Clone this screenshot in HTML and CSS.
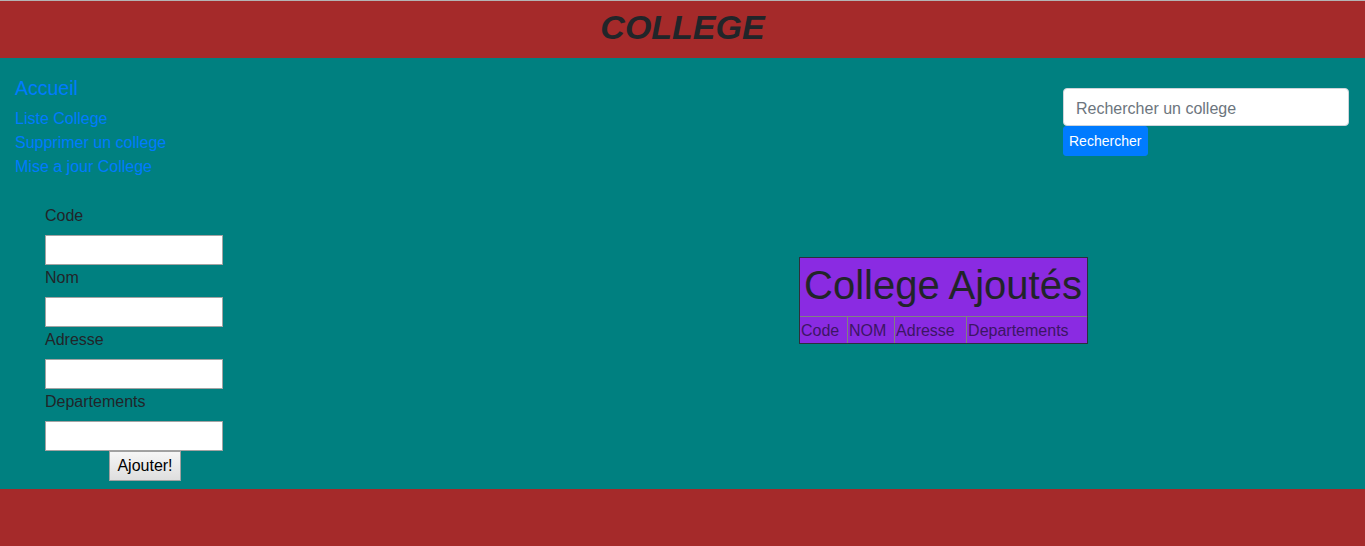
FILE: index.html
```html
<!DOCTYPE html>
<html lang="fr">
<head>
<meta charset="utf-8">
<title>College</title>
<link rel="stylesheet" href="styles.css">
</head>
<body>
<header class="topbar">
  <h1 class="brand">COLLEGE</h1>
</header>
<main class="main">
  <div class="leftcol">
    <nav class="nav">
      <a class="nav-home" href="#">Accueil</a>
      <a class="nav-link" href="#">Liste College</a>
      <a class="nav-link" href="#">Supprimer un college</a>
      <a class="nav-link" href="#">Mise a jour College</a>
    </nav>
    <form class="addform">
      <label class="field-label">Code</label>
      <input class="field" type="text">
      <label class="field-label">Nom</label>
      <input class="field" type="text">
      <label class="field-label">Adresse</label>
      <input class="field" type="text">
      <label class="field-label">Departements</label>
      <input class="field" type="text">
      <button class="add-btn" type="button">Ajouter!</button>
    </form>
  </div>
  <div class="rightcol">
    <div class="searchrow">
      <div class="search">
        <input class="search-input" type="text" placeholder="Rechercher un college">
        <button class="search-btn" type="button">Rechercher</button>
      </div>
    </div>
    <table class="ctable">
      <thead>
        <tr><th class="cap" colspan="4"><div class="cap-title">College Ajoutés</div></th></tr>
      </thead>
      <tbody>
        <tr>
          <td class="cell first">Code</td>
          <td class="cell">NOM</td>
          <td class="cell">Adresse</td>
          <td class="cell">Departements</td>
        </tr>
      </tbody>
    </table>
  </div>
</main>
<footer class="footer"></footer>
</body>
</html>
```
FILE: styles.css
```css
* { box-sizing: border-box; }
html, body { margin: 0; padding: 0; }
body {
  font-family: "Liberation Sans", Arial, sans-serif;
  font-size: 16px;
  line-height: 24px;
  color: #212529;
  background: #008080;
  border-top: 1px solid #b4b4b4;
}
.topbar {
  background: #a52a2a;
  height: 57px;
  display: flex;
  justify-content: center;
  align-items: flex-start;
}
.brand {
  margin: 0;
  font-size: 34px;
  font-weight: bold;
  font-style: italic;
  line-height: 53px;
  color: #212529;
}
.main {
  display: flex;
  background: #008080;
}
.leftcol {
  width: 245px;
  flex: 0 0 245px;
  padding: 17px 0 8px 15px;
}
.nav { display: flex; flex-direction: column; align-items: flex-start; }
.nav a { color: #007bff; text-decoration: none; }
.nav-home { font-size: 19.5px; line-height: 24px; padding-top: 1px; margin-bottom: 6px; }
.nav-link { font-size: 16px; line-height: 24px; padding-top: 1px; margin-bottom: -1px; }
.addform {
  width: 200px;
  margin: 25px 0 0 30px;
  display: flex;
  flex-direction: column;
  align-items: flex-start;
}
.field-label {
  display: block;
  line-height: 24px;
  padding-top: 1px;
  margin-bottom: 7px;
}
.field {
  display: block;
  width: 178px;
  height: 30px;
  border: 1px solid #a3a3a3;
  background: #fff;
  margin: 0;
  padding: 1px 2px;
  font-family: inherit;
  font-size: 16px;
}
.add-btn {
  align-self: center;
  height: 30px;
  padding: 0 7px;
  font-family: inherit;
  font-size: 16px;
  color: #000;
  border: 1px solid #a0a0a0;
  background: linear-gradient(#f6f6f6, #dedede);
  border-radius: 0;
}
.rightcol {
  flex: 1;
  display: flex;
  flex-direction: column;
  align-items: flex-start;
}
.searchrow {
  align-self: stretch;
  display: flex;
  justify-content: flex-end;
  padding: 30px 16px 0 0;
}
.search {
  width: 286px;
  display: flex;
  flex-direction: column;
  align-items: flex-start;
}
.search-input {
  width: 286px;
  height: 38px;
  border: 1px solid #ced4da;
  border-radius: 4px;
  padding: 8px 12px 4px;
  font-family: inherit;
  font-size: 16px;
  color: #495057;
  background: #fff;
}
.search-input::placeholder { color: #6c757d; }
.search-btn {
  height: 30px;
  padding: 4px 6px 4px 5px;
  line-height: 20px;
  font-family: inherit;
  font-size: 14px;
  color: #fff;
  background: #007bff;
  border: 1px solid #007bff;
  border-radius: 3px;
}
.ctable {
  margin: 101px 0 0 554px;
  border: 1px solid #2c2f3c;
  border-spacing: 0;
  background: #8a2be2;
}
.cap {
  padding: 3px 5px 0 4px;
  text-align: left;
  font-weight: normal;
}
.cap-title {
  font-size: 40px;
  line-height: 48px;
  font-weight: 500;
  margin-bottom: 7px;
  color: #212529;
}
.cell {
  padding: 2px 1px 0;
  line-height: 24px;
  color: #3c1664;
  border-top: 1px solid #808080;
  border-left: 1px solid #808080;
}
.cell.first { border-left: 0; }
.footer {
  background: #a52a2a;
  height: 57px;
}
```
